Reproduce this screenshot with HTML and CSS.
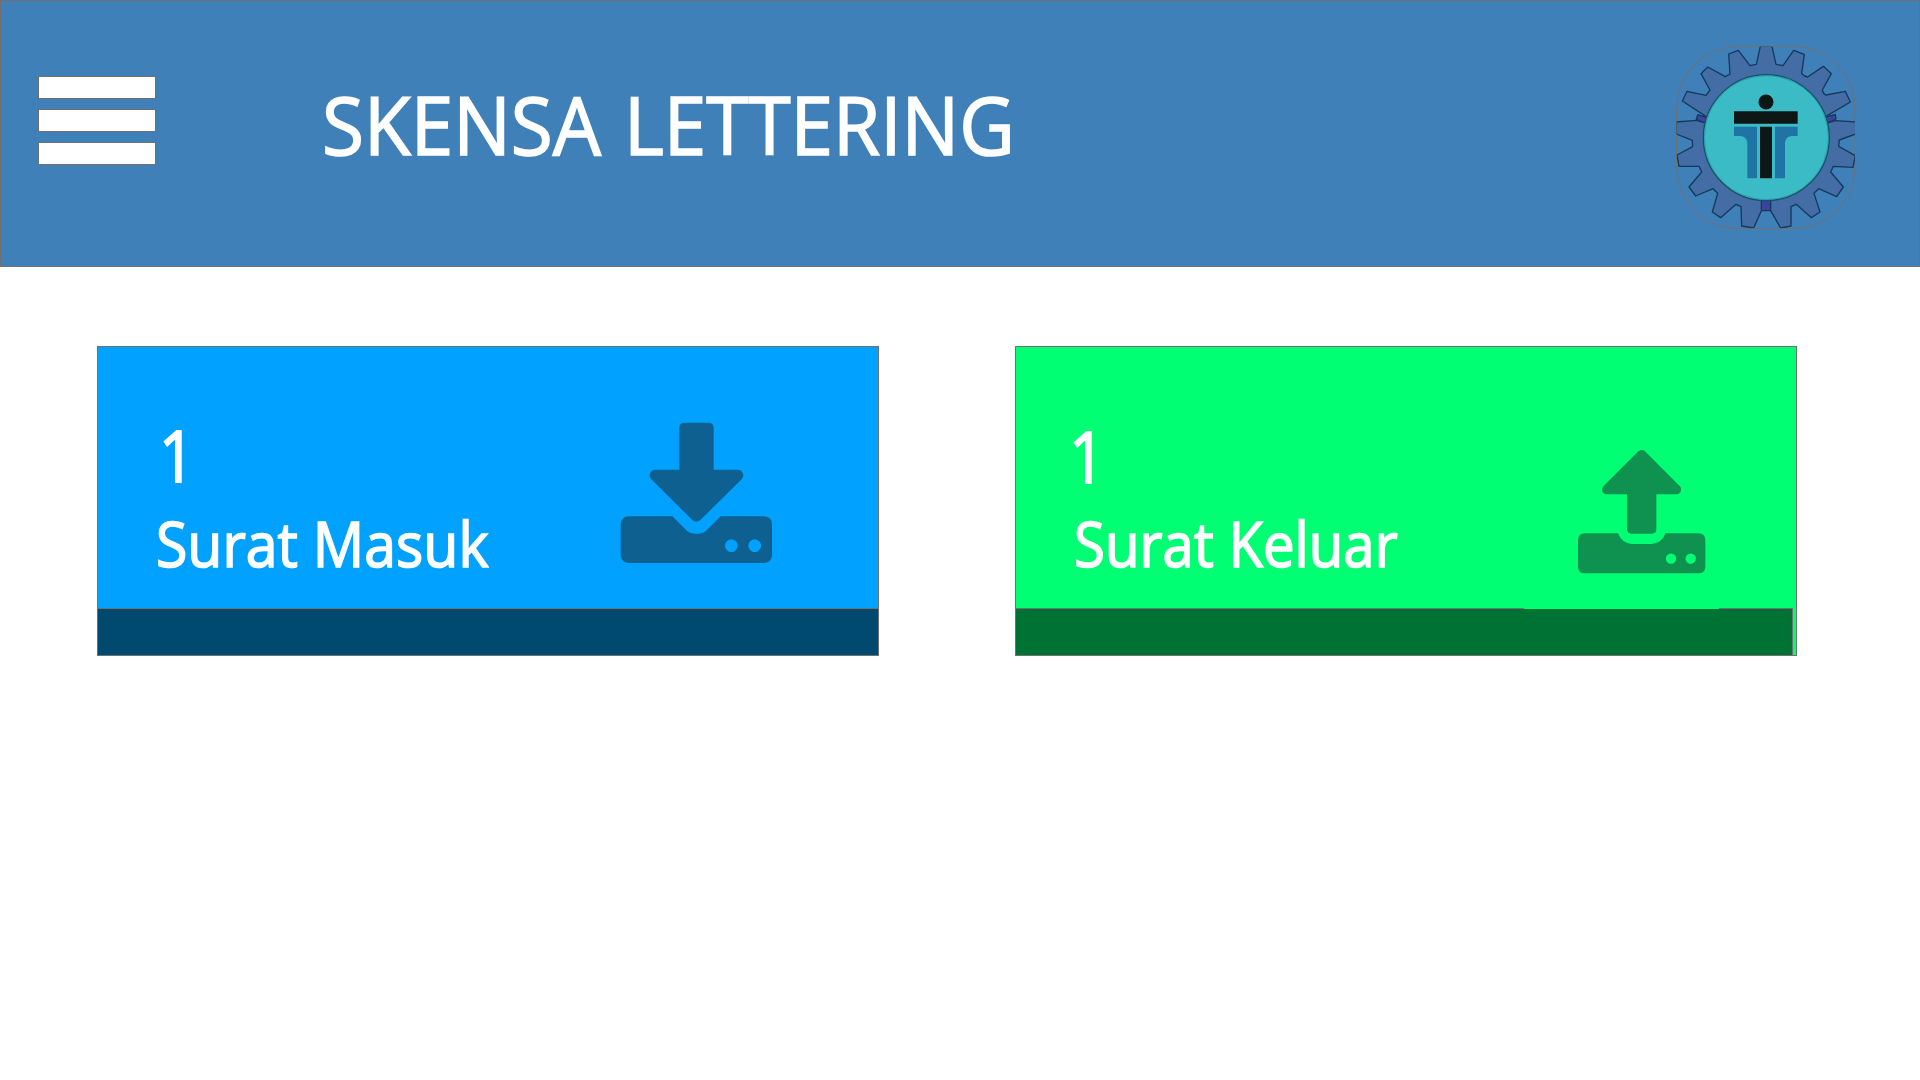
FILE: index.html
```
<!DOCTYPE html>
<html lang="id">
<head>
<meta charset="utf-8">
<title>Skensa Lettering</title>
<link rel="stylesheet" href="styles.css">
</head>
<body>
<header class="header">
  <div class="menu"><span></span><span></span><span></span></div>
  <h1 class="title">SKENSA LETTERING</h1>
  <svg class="logo" viewBox="0 0 660 660">
    <clipPath id="frame"><rect x="50" y="50" width="535" height="545" rx="184"/></clipPath>
    <rect x="50" y="49.500" width="535" height="546" rx="184" fill="none" stroke="#707070" stroke-width="3"/>
    <g stroke="#123a5c" stroke-width="4" stroke-linejoin="round" clip-path="url(#frame)">
      <path fill="#3f419f" d="M113 254L145 264L140 282L109 268ZM526 253L495 262L500 281L528 267ZM304 505H332V542H304Z"/>
      <path fill="#446da5" d="M301 49H336L348 103L369 107L401 61L433 73L425 130Q433 140 443 141L490 109L514 131L487 180Q490 193 498 195L556 184L571 216L503 256L480 270L502 279L526 272L590 276V311L538 330L536 349L586 377L579 412L520 409L512 426L550 471L530 500L476 476L462 490L480 546L454 563L409 523L393 530V588L362 594L332 542V505H304V542L281 594L245 588L243 530L228 523L182 563L157 546L173 490L159 476L107 498L87 471L125 426L117 409H57L51 375L98 350L97 331L49 312V276L110 271L137 279L155 270L133 256L67 213L81 184L138 196L150 180L123 131L143 111L196 140L210 132L206 72L235 61L270 107L289 103Z"/>
    </g>
    <circle cx="319" cy="323" r="189" fill="#3abbc5" stroke="#165266" stroke-width="4"/>
    <circle cx="319" cy="323" r="186" fill="none" stroke="#23899a" stroke-width="3" opacity=".6"/>
    <circle cx="318" cy="216" r="22.500" fill="#0d1715"/>
    <path fill="#0d1715" d="M222 244H413V281H222ZM300 290H336V445H300Z"/>
    <path fill="#2074a5" d="M222 290H291V445H262V338Q260 320 242 318H222ZM413 290H345V445H375V338Q377 320 394 318H413Z"/>
  </svg>
</header>
<main class="cards">
  <section class="card incoming">
    <div class="card-body">
      <div class="info"><div class="count">1</div><div class="label">Surat Masuk</div></div>
      <svg class="icon" viewBox="0 0 600 540">
        <path fill="#0d6090" d="M254 68H325Q341 68 341 84V209H414Q429 211 430 226Q430 233 425 238L301 360Q289 371 277 360L154 238Q149 233 149 226Q150 211 165 209H238V84Q238 68 254 68Z"/>
        <path fill="#0d6090" fill-rule="evenodd" d="M86 349H217L256 388Q268 401 284 401H296Q311 401 323 388L362 349H492Q516 351 516 373V465Q515 488 492 489H86Q63 488 62 465V373Q63 350 86 349ZM394 418a19 19 0 1 0 .1 0ZM464 418a19 19 0 1 0 .1 0Z"/>
      </svg>
    </div>
    <div class="strip"></div>
  </section>
  <section class="card outgoing">
    <div class="card-body">
      <div class="info"><div class="count">1</div><div class="label">Surat Keluar</div></div>
      <svg class="icon" viewBox="0 0 540 480">
        <path fill="#0f9150" d="M265 64Q275 56 285 64L389 168Q394 173 393 181Q391 192 380 193H319V297Q319 311 306 311H245Q231 311 231 297V193H170Q158 192 156 181Q156 173 161 168Z"/>
        <path fill="#0f9150" fill-rule="evenodd" d="M104 310H204Q216 340 245 342H305Q334 340 347 310H446Q465 311 466 330V410Q465 429 446 430H104Q85 429 84 410V330Q85 311 104 310ZM363 370.500a15.500 15.500 0 1 0 .1 0ZM422 370.500a15.500 15.500 0 1 0 .1 0Z"/>
      </svg>
    </div>
    <div class="strip"><span class="gap"></span></div>
  </section>
</main>
</body>
</html>
```
FILE: styles.css
```
* { box-sizing: border-box; }
body {
  margin: 0;
  background: #fff;
  color: #fff;
  font-family: "Open Sans", "Noto Sans", sans-serif;
}
.header {
  display: flex;
  align-items: flex-start;
  height: 267px;
  padding-left: 37px;
  background: #4080b8;
  border: 1px solid #707070;
}
.menu {
  display: flex;
  flex-direction: column;
  gap: 10px;
  width: 118px;
  padding-top: 75px;
}
.menu span {
  height: 23px;
  background: #fff;
  border: 1px solid #707070;
}
.title {
  width: 740px;
  margin: 68px 0 0 166px;
  font-size: 80px;
  font-weight: 400;
  line-height: 109px;
  word-spacing: 3px;
  white-space: nowrap;
  transform: scaleX(.956);
  transform-origin: 0 0;
  -webkit-text-stroke: 1.6px #fff;
}
.logo {
  width: 220px;
  height: 220px;
  margin: 29px 39px 0 auto;
}
.cards {
  display: flex;
  gap: 136px;
  padding: 79px 0 0 97px;
}
.card {
  width: 782px;
  height: 310px;
  border: 1px solid #707070;
}
.incoming { background: #00a1ff; }
.outgoing { background: #00ff73; }
.card-body {
  display: flex;
  justify-content: space-between;
  height: 261px;
}
.info {
  width: 400px;
  padding: 68px 0 0 58px;
  white-space: nowrap;
  -webkit-text-stroke: 1.6px #fff;
}
.count {
  font-size: 71.5px;
  line-height: 80px;
  margin-left: 3px;
  transform: scaleX(.87);
  transform-origin: 0 0;
  -webkit-text-stroke: 2px #fff;
}
.label {
  margin-top: 8px;
  font-size: 61.5px;
  line-height: 80px;
  transform: scaleX(.93);
  transform-origin: 0 0;
}
.outgoing .info { padding-top: 69px; }
.outgoing .count { margin-left: -5px; }
.outgoing .label {
  margin-top: 7px;
  transform: scaleX(.916);
}
.incoming .icon {
  width: 200px;
  height: 180px;
  margin: 53px 78px 0 0;
}
.outgoing .icon {
  width: 180px;
  height: 160px;
  margin: 83px 66px 0 0;
}
.strip {
  height: 47px;
  border-top: 1px solid #707070;
}
.incoming .strip { background: #004a70; }
.outgoing .strip {
  position: relative;
  width: 777px;
  background: #007334;
  border-right: 1px solid #707070;
}
.gap {
  position: absolute;
  top: -1px;
  left: 508px;
  width: 195px;
  height: 1px;
  background: #00ff73;
}
```
